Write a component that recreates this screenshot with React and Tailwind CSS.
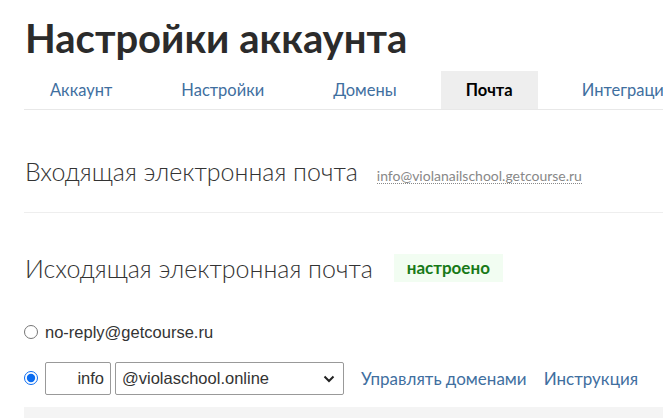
import React from "react";

export default function App() {
  const tabs = ["Аккаунт", "Настройки", "Домены", "Почта", "Интеграции"];
  return (
    <div className="w-[663px] h-[418px] overflow-hidden bg-white" style={{ fontFamily: "Lato, 'Noto Sans', sans-serif" }}>
      <div className="pl-[24px] pt-[14px]">
        <h1 className="pl-[1px] text-[40px] leading-[48px] font-bold text-[#2b2b2b] whitespace-nowrap">Настройки аккаунта</h1>
        <div className="mt-[9px] flex gap-[19px] border-b border-[#e8e8e8] whitespace-nowrap pl-[1px]">
          {tabs.map((t) =>
            t === "Почта" ? (
              <div key={t} className="px-[25px] h-[38px] flex items-center bg-[#eeeeee] text-[16.5px] font-bold text-black">{t}</div>
            ) : (
              <div key={t} className="px-[25px] h-[38px] flex items-center text-[16.5px] text-[#3f6f9f]">{t}</div>
            )
          )}
        </div>
        <div className="mt-[46px] h-[30px] flex items-baseline gap-[19px] pl-[1px] whitespace-nowrap">
          <span className="text-[25px] leading-[30px] font-light text-[#333]">Входящая электронная почта</span>
          <span className="text-[14px] text-[#888] border-b border-dotted border-[#888] leading-[15px]">info@violanailschool.getcourse.ru</span>
        </div>
        <div className="mt-[26px] border-t border-[#eeeeee]"></div>
        <div className="mt-[40px] flex items-center gap-[21px] pl-[1px] whitespace-nowrap">
          <span className="text-[25px] leading-[30px] font-light text-[#333]">Исходящая электронная почта</span>
          <span className="px-[13px] h-[28px] flex items-center bg-[#f2fdf2] text-[17px] font-bold text-[#187a18]">настроено</span>
        </div>
        <div className="mt-[39px] h-[20px] flex items-center gap-[7px] whitespace-nowrap" style={{ fontFamily: "'Liberation Sans', Arial, sans-serif" }}>
          <input type="radio" name="r" className="m-0 w-[14px] h-[14px]" readOnly />
          <span className="text-[16.5px] text-[#333]">no-reply@getcourse.ru</span>
        </div>
        <div className="mt-[20px] flex items-center whitespace-nowrap">
          <input type="radio" name="r" defaultChecked className="m-0 w-[14px] h-[14px] accent-[#0b6cf0] -mt-[2px]" />
          <div className="ml-[7px] w-[66px] h-[33px] border border-[#999] rounded-[2px] flex items-center justify-end pr-[6px] text-[16.5px] text-[#333]" style={{ fontFamily: "'Liberation Sans', Arial, sans-serif" }}>info</div>
          <div className="ml-[4px] w-[229px] h-[33px] border border-[#999] rounded-[2px] flex items-center justify-between pl-[6px] pr-[8px] text-[16.5px] text-[#333]" style={{ fontFamily: "'Liberation Sans', Arial, sans-serif" }}>
            <span>@violaschool.online</span>
            <svg width="12" height="8" viewBox="0 0 12 8"><path d="M1.5 1.5 L6 6 L10.5 1.5" fill="none" stroke="#222" strokeWidth="2" /></svg>
          </div>
          <span className="ml-[17px] text-[17px] text-[#3f6f9f]">Управлять доменами</span>
          <span className="ml-[17px] text-[17px] text-[#3f6f9f]">Инструкция</span>
        </div>
        <div className="mt-[12px] h-[20px] bg-[#f4f4f4]"></div>
      </div>
    </div>
  );
}
